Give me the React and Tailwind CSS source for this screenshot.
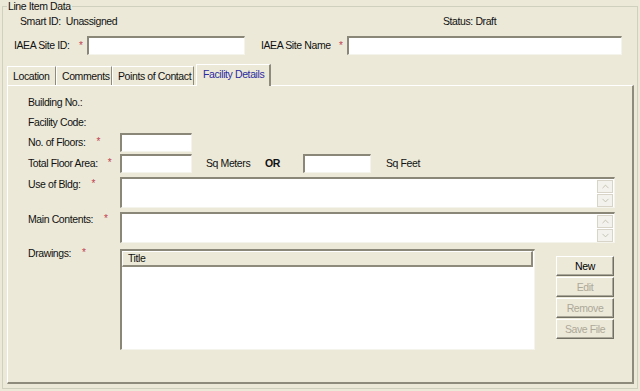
import { ChevronUp, ChevronDown } from "lucide-react";

const font = { fontFamily: '"Liberation Sans", Arial, sans-serif' };

function Req() {
  return <span className="text-[10px] leading-none text-[#C0404F] self-start mt-[1px] tracking-normal">*</span>;
}

function Field({ className = "" }) {
  return (
    <div
      className={`shrink-0 bg-white border-t-2 border-l-2 border-b border-r border-t-[#8A8778] border-l-[#8A8778] border-b-[#F4F3EC] border-r-[#F4F3EC] ${className}`}
    />
  );
}

function Spin() {
  return (
    <div className="flex flex-col gap-[1px] mr-[1px] mt-[1px]">
      <div className="w-[16px] h-[14px] flex items-center justify-center border border-[#D8D5C8] bg-[#F3F2EC]">
        <ChevronUp size={11} strokeWidth={2} className="text-[#C2BFB0]" />
      </div>
      <div className="w-[16px] h-[14px] flex items-center justify-center border border-[#D8D5C8] bg-[#F3F2EC]">
        <ChevronDown size={11} strokeWidth={2} className="text-[#C2BFB0]" />
      </div>
    </div>
  );
}

function Memo() {
  return (
    <div className="w-[495px] h-[31px] shrink-0 bg-white border-t-2 border-l-2 border-b border-r border-t-[#8A8778] border-l-[#8A8778] border-b-[#F4F3EC] border-r-[#F4F3EC] flex justify-end">
      <Spin />
    </div>
  );
}

function Btn({ children, enabled }) {
  return (
    <div
      className={`w-[58px] h-[20px] flex items-center justify-center border border-t-white border-l-white border-b-[#716F64] border-r-[#716F64] shadow-[inset_-1px_-1px_0_#ACA899] ${
        enabled ? "text-black" : "text-[#ACA899]"
      }`}
    >
      {children}
    </div>
  );
}

function Tab({ children, active, w }) {
  if (active) {
    return (
      <div className={`${w} h-[22px] -mb-[1px] ml-[2px] pl-[6px] flex items-start pt-[3px] bg-[#ECE9D8] border-t border-l border-white border-r-2 border-r-[#8E8B7D] text-[#2B2BA0] relative z-10`}>
        {children}
      </div>
    );
  }
  return (
    <div className={`${w} h-[19px] pl-[5px] flex items-center border-t border-l border-white border-r border-r-[#8E8B7D]`}>
      {children}
    </div>
  );
}

export default function App() {
  return (
    <div
      className="w-[640px] h-[391px] bg-[#ECE9D8] text-[10.5px] leading-[13px] tracking-[-0.4px] text-[#111] pl-[2px]"
      style={font}
    >
      <fieldset className="w-[636px] border border-[#D0D0BF] flex flex-col pb-[4px]">
        <legend className="ml-[4px] px-[1px] leading-[13px]">Line Item Data</legend>

        {/* header info */}
        <div className="flex mt-[2px] h-[13px] shrink-0">
          <span className="ml-[17px] w-[423px]">Smart ID:&nbsp; Unassigned</span>
          <span>Status: Draft</span>
        </div>

        {/* site id / name */}
        <div className="flex items-center mt-[8px] h-[19px] shrink-0">
          <span className="ml-[11px] w-[65px]">IAEA Site ID:</span>
          <span className="w-[8px] flex"><Req /></span>
          <Field className="w-[158px] h-[19px]" />
          <span className="ml-[16px] w-[78px]">IAEA Site Name</span>
          <span className="w-[8px] flex"><Req /></span>
          <Field className="w-[275px] h-[19px]" />
        </div>

        {/* tabs */}
        <div className="flex items-end ml-[4px] mt-[8px] h-[22px] shrink-0">
          <Tab w="w-[49px]">Location</Tab>
          <Tab w="w-[56px]">Comments</Tab>
          <Tab w="w-[82px]">Points of Contact</Tab>
          <Tab w="w-[75px]" active>Facility Details</Tab>
        </div>

        {/* panel */}
        <div className="shrink-0 ml-[4px] w-[627px] h-[299px] border-t border-l border-white border-r-2 border-b-2 border-r-[#8E8B7D] border-b-[#8E8B7D] pt-[6px] pl-[20px] flex flex-col">
          <div className="h-[20px] flex items-center">Building No.:</div>
          <div className="h-[20px] flex items-center">Facility Code:</div>

          <div className="h-[20px] flex items-center">
            <div className="w-[92px] flex items-center gap-[11px]">
              <span>No. of Floors:</span>
              <Req />
            </div>
            <Field className="w-[72px] h-[19px]" />
          </div>

          <div className="h-[20px] mt-[1px] flex items-center">
            <div className="w-[92px] flex items-center gap-[10px]">
              <span>Total Floor Area:</span>
              <Req />
            </div>
            <Field className="w-[72px] h-[19px]" />
            <span className="ml-[14px] w-[59px]">Sq Meters</span>
            <span className="w-[38px] font-bold">OR</span>
            <Field className="w-[68px] h-[19px]" />
            <span className="ml-[15px]">Sq Feet</span>
          </div>

          <div className="mt-[4px] flex">
            <div className="w-[92px] flex gap-[11px] pt-[1px]">
              <span>Use of Bldg:</span>
              <Req />
            </div>
            <Memo />
          </div>

          <div className="mt-[4px] flex">
            <div className="w-[92px] flex gap-[11px] pt-[1px]">
              <span>Main Contents:</span>
              <Req />
            </div>
            <Memo />
          </div>

          <div className="mt-[6px] flex">
            <div className="w-[92px] flex gap-[11px] -mt-[2px]">
              <span>Drawings:</span>
              <Req />
            </div>
            <div className="shrink-0 w-[415px] h-[101px] bg-white border-t-2 border-l-2 border-b border-r border-t-[#8A8778] border-l-[#8A8778] border-b-[#F4F3EC] border-r-[#F4F3EC]">
              <div className="w-[411px] h-[16px] bg-[#ECE9D8] border-t border-l border-white border-b-2 border-r-2 border-b-[#8E8B7D] border-r-[#8E8B7D] pl-[5px] flex items-center">
                Title
              </div>
            </div>
            <div className="ml-[21px] mt-[7px] flex flex-col gap-[1px]">
              <Btn enabled>New</Btn>
              <Btn>Edit</Btn>
              <Btn>Remove</Btn>
              <Btn>Save File</Btn>
            </div>
          </div>
        </div>
      </fieldset>
    </div>
  );
}
